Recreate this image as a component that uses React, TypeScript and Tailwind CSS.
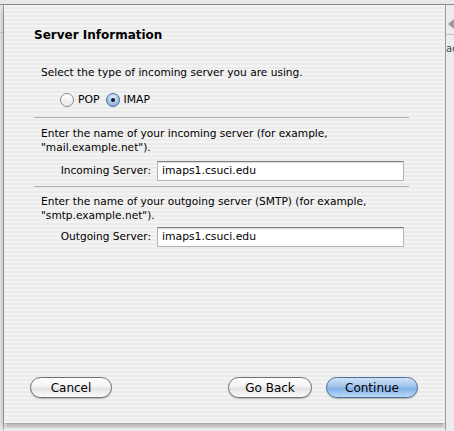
import React from 'react';

const pinstripe =
  'bg-[repeating-linear-gradient(180deg,#f3f3f3_0px,#f3f3f3_2px,#ebebeb_2px,#ebebeb_4px)]';

const font = "font-['Lucida_Grande','DejaVu_Sans',sans-serif]";

type AquaButtonProps = {
  label: string;
  width: string;
  primary?: boolean;
};

const AquaButton: React.FC<AquaButtonProps> = ({ label, width, primary }) => {
  const skin = primary
    ? 'border-[#4a6f9c] bg-[linear-gradient(180deg,#cfe2f7_0%,#9fc3eb_48%,#7fb0e6_52%,#b9d8f7_100%)]'
    : 'border-[#6f6f6f] bg-[linear-gradient(180deg,#ffffff_0%,#f2f2f2_48%,#e2e2e2_52%,#fbfbfb_100%)]';
  return (
    <button
      className={`${width} h-[21px] rounded-full border ${skin} text-[12px] leading-none text-black shadow-[0_1px_1px_rgba(0,0,0,0.25)]`}
    >
      {label}
    </button>
  );
};

type FieldRowProps = {
  label: string;
  value: string;
};

const FieldRow: React.FC<FieldRowProps> = ({ label, value }) => (
  <div className="flex items-center">
    <span className="w-[117px] pr-[6px] text-right text-[10.6px]">{label}</span>
    <div className="flex h-[20px] w-[247px] items-center border border-[#b5b5b5] border-t-[#7e7e7e] bg-white pl-[4px] text-[10.8px] shadow-[inset_0_1px_1px_rgba(0,0,0,0.15)]">
      {value}
    </div>
  </div>
);

const Radio: React.FC<{ checked?: boolean; label: string }> = ({ checked, label }) => (
  <label className="flex items-center gap-[4px]">
    <span
      className={`flex h-[14px] w-[14px] items-center justify-center rounded-full border ${
        checked
          ? 'border-[#4b6d96] bg-[radial-gradient(circle_at_50%_30%,#e3eefb_0%,#9cc0e8_60%,#6d9bd0_100%)]'
          : 'border-[#8a8a8a] bg-[linear-gradient(180deg,#ffffff_0%,#e9e9e9_100%)]'
      }`}
    >
      {checked && <span className="h-[4px] w-[4px] rounded-full bg-[#1a1a1a]" />}
    </span>
    <span className="text-[10.8px] leading-[14px]">{label}</span>
  </label>
);

export default function App() {
  return (
    <div className={`h-[431px] w-[454px] overflow-hidden ${pinstripe} ${font} text-black`}>
      <div className="h-[5px] border-b border-[#8c8c8c] bg-[#e8e8e8]" />
      <div className="flex h-[425px]">
        {/* strip of the parent window at the left */}
        <div className="flex w-[4px] flex-col border-r border-[#a9a9a9] bg-[#e4e4e4]">
          <div className="h-[28px] border-b border-[#c4c4c4]" />
        </div>

        {/* the sheet */}
        <div className={`mb-[7px] flex w-[441px] flex-col ${pinstripe} shadow-[0_3px_5px_rgba(0,0,0,0.35)]`}>
          <div className="pl-[30px] pt-[22px] text-[12px] font-bold leading-[16px]">Server Information</div>

          <div className="pl-[37px] pt-[22px] text-[10.6px] leading-[14px]">
            Select the type of incoming server you are using.
          </div>
          <div className="flex gap-[6px] pl-[56px] pt-[14px]">
            <Radio label="POP" />
            <Radio label="IMAP" checked />
          </div>

          <div className="ml-[30px] mr-[36px] mt-[10px] border-t border-[#b0b0b0]" />

          <div className="pl-[37px] pt-[8px] text-[10.6px] leading-[14px]">
            Enter the name of your incoming server (for example,
            <br />
            "mail.example.net").
          </div>
          <div className="pl-[36px] pt-[7px]">
            <FieldRow label="Incoming Server:" value="imaps1.csuci.edu" />
          </div>

          <div className="ml-[30px] mr-[36px] mt-[5px] border-t border-[#b0b0b0]" />

          <div className="pl-[37px] pt-[7px] text-[10.6px] leading-[14px]">
            Enter the name of your outgoing server (SMTP) (for example,
            <br />
            "smtp.example.net").
          </div>
          <div className="pl-[36px] pt-[5px]">
            <FieldRow label="Outgoing Server:" value="imaps1.csuci.edu" />
          </div>

          <div className="mt-auto flex items-center pb-[25px] pl-[26px]">
            <AquaButton label="Cancel" width="w-[82px]" />
            <div className="flex-1" />
            <div className="flex gap-[14px] pr-[27px]">
              <AquaButton label="Go Back" width="w-[84px]" />
              <AquaButton label="Continue" width="w-[92px]" primary />
            </div>
          </div>
        </div>

        {/* strip of the parent window at the right */}
        <div className="flex w-[9px] flex-col border-l border-[#9a9a9a] bg-[#ececec]">
          <div className="h-[30px] border-b border-[#c4c4c4] pt-[14px] pl-[2px]">
            <span className="block h-0 w-0 border-y-[5px] border-r-[6px] border-y-transparent border-r-[#9a9a9a]" />
          </div>
          <div className="overflow-hidden pt-[8px] text-[10px] leading-[12px] text-[#444]">ac</div>
        </div>
      </div>
    </div>
  );
}
